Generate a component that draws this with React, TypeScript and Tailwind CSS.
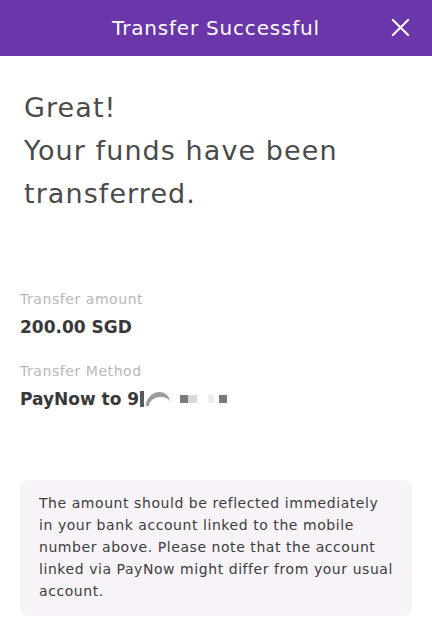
import React from "react";

const font = { fontFamily: '"DejaVu Sans", sans-serif' };

const CloseIcon = () => (
  <svg width="19" height="19" viewBox="0 0 20 20" fill="none">
    <path d="M2 2L18 18M18 2L2 18" stroke="white" strokeWidth="2.2" strokeLinecap="round" />
  </svg>
);

// number is masked in the screenshot
const MaskedDigits = () => (
  <span className="ml-[1px] inline-flex items-center">
    <span className="h-[16px] w-[4px] bg-[#5a5a5a]" />
    <span className="ml-[2px] h-[14px] w-[24px] rounded-tl-[14px] rounded-tr-[10px] border-t-[5px] border-l-[3px] border-[#9c9c9c]" />
    <span className="ml-[10px] h-[8px] w-[8px] bg-[#7a7a7a]" />
    <span className="h-[8px] w-[9px] bg-[#d9d9d9]" />
    <span className="ml-[11px] h-[8px] w-[6px] bg-[#eeeeee]" />
    <span className="ml-[5px] h-[8px] w-[8px] bg-[#7a7a7a]" />
  </span>
);

export default function App() {
  return (
    <div className="flex h-[640px] w-[432px] flex-col bg-white" style={font}>
      <header className="relative flex h-[56px] items-center justify-center bg-[#6a36a9]">
        <h1 className="text-[20px] tracking-[0.04em] text-white">Transfer Successful</h1>
        <button className="absolute right-[18px] top-[14px] p-[4px]">
          <CloseIcon />
        </button>
      </header>

      <section className="px-[24px] pt-[30px]">
        <p className="text-[27px] leading-[43px] tracking-[0.04em] text-[#4a4a4a]">
          Great!
          <br />
          Your funds have been transferred.
        </p>
      </section>

      <section className="flex flex-col gap-[20px] px-[20px] pt-[74px]">
        <div className="flex flex-col gap-[5px]">
          <span className="text-[14px] tracking-[0.04em] text-[#b8b8b8]">Transfer amount</span>
          <span className="text-[17px] font-semibold text-[#383838]">200.00 SGD</span>
        </div>
        <div className="flex flex-col gap-[5px]">
          <span className="text-[14px] tracking-[0.04em] text-[#b8b8b8]">Transfer Method</span>
          <span className="flex items-center text-[17px] font-semibold text-[#383838]">
            PayNow to 9<MaskedDigits />
          </span>
        </div>
      </section>

      <div className="mx-[20px] mt-[68px] rounded-[8px] bg-[#f7f3f9] px-[19px] pb-[14px] pt-[12px]">
        <p className="text-[14px] leading-[22px] tracking-[0.04em] text-[#3d3d3d]">
          The amount should be reflected immediately in your bank account linked to the mobile number
          above. Please note that the account linked via PayNow might differ from your usual account.
        </p>
      </div>
    </div>
  );
}
